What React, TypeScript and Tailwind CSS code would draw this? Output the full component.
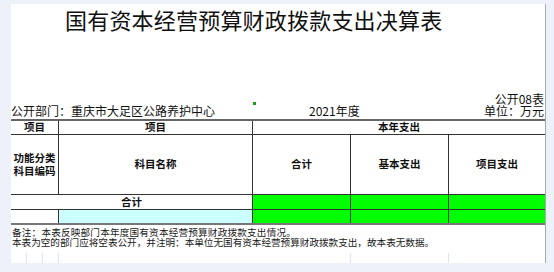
const cjk = { fontFamily: '"Noto Sans CJK SC", "Noto Sans", sans-serif' };

const line = "border-[#333]";

export default function App() {
  return (
    <div className="h-[272px] w-[554px] bg-[#edf1f9] pl-[11px] pt-[4px]" style={cjk}>
      <div className="flex h-[259px] w-[535px] flex-col border-r border-[#a8a8a8] bg-white text-[#111]">
        {/* title */}
        <div className="flex h-[30px] items-center pl-[54px] text-[22px] leading-none tracking-[0.2px]">
          国有资本经营预算财政拨款支出决算表
        </div>
        <div className="h-[59px]" />
        <div className="flex h-[12px] items-center justify-end pr-[1px] text-[12px] leading-[12px]">
          公开08表
        </div>
        <div className="flex h-[13px] items-start text-[12px] leading-[12px]">
          <span className="w-[242px] whitespace-nowrap">公开部门：重庆市大足区公路养护中心</span>
          <span className="relative w-[56px]">
            <span className="absolute -top-[3px] left-0 h-[3px] w-[3px] bg-[#1a9b1a]" />
          </span>
          <span>2021年度</span>
          <span className="ml-auto pr-[1px]">单位：万元</span>
        </div>

        {/* table */}
        <div className="mt-[1px] w-[534px] border-t-2 border-[#666] text-[10.5px] font-bold leading-none">
          <div className={`flex h-[14px] border-b ${line}`}>
            <div className={`flex w-[48px] items-center justify-center border-r ${line}`}>项目</div>
            <div className={`flex w-[194px] items-center justify-center border-r ${line}`}>项目</div>
            <div className="flex flex-1 items-center justify-center">本年支出</div>
          </div>
          <div className={`flex h-[60px] border-b ${line}`}>
            <div className={`flex w-[48px] flex-col items-center justify-center gap-[3px] border-r ${line}`}>
              <span>功能分类</span>
              <span>科目编码</span>
            </div>
            <div className={`flex w-[194px] items-center justify-center border-r ${line}`}>科目名称</div>
            <div className={`flex w-[98px] items-center justify-center border-r ${line}`}>合计</div>
            <div className={`flex w-[98px] items-center justify-center border-r ${line}`}>基本支出</div>
            <div className="flex flex-1 items-center justify-center">项目支出</div>
          </div>
          <div className={`flex h-[15px] border-b ${line}`}>
            <div className={`flex w-[242px] items-center justify-center border-r ${line}`}>合计</div>
            <div className={`w-[98px] border-r bg-[#00ff00] ${line}`} />
            <div className={`w-[98px] border-r bg-[#00ff00] ${line}`} />
            <div className="flex-1 bg-[#00ff00]" />
          </div>
          <div className={`flex h-[15px] border-b-2 border-[#777]`}>
            <div className={`w-[48px] border-r ${line}`} />
            <div className={`w-[194px] border-r bg-[#ccffff] ${line}`} />
            <div className={`w-[98px] border-r bg-[#00ff00] ${line}`} />
            <div className={`w-[98px] border-r bg-[#00ff00] ${line}`} />
            <div className="flex-1 bg-[#00ff00]" />
          </div>
        </div>

        {/* notes */}
        <div className="flex flex-col pl-[1px] pt-[2px] text-[9.6px] leading-[10px] text-[#1a1a1a]">
          <div className="flex h-[10px] items-center whitespace-nowrap tracking-[0.2px]">
            备注：本表反映部门本年度国有资本经营预算财政拨款支出情况。
          </div>
          <div className="flex h-[10px] items-center whitespace-nowrap">
            本表为空的部门应将空表公开，并注明：本单位无国有资本经营预算财政拨款支出，故本表无数据。
          </div>
        </div>

        {/* faint grid below */}
        <div className="mt-auto flex h-[10px] w-[534px]">
          <div className="w-[16px] border-r border-[#e2e6ee]" />
          <div className="w-[16px] border-r border-[#e2e6ee]" />
          <div className="w-[16px] border-r border-[#e2e6ee]" />
          <div className="w-[194px]" />
          <div className="w-[98px] border-r border-[#e2e6ee]" />
          <div className="w-[98px] border-r border-[#e2e6ee]" />
          <div className="flex-1" />
        </div>
      </div>
    </div>
  );
}
